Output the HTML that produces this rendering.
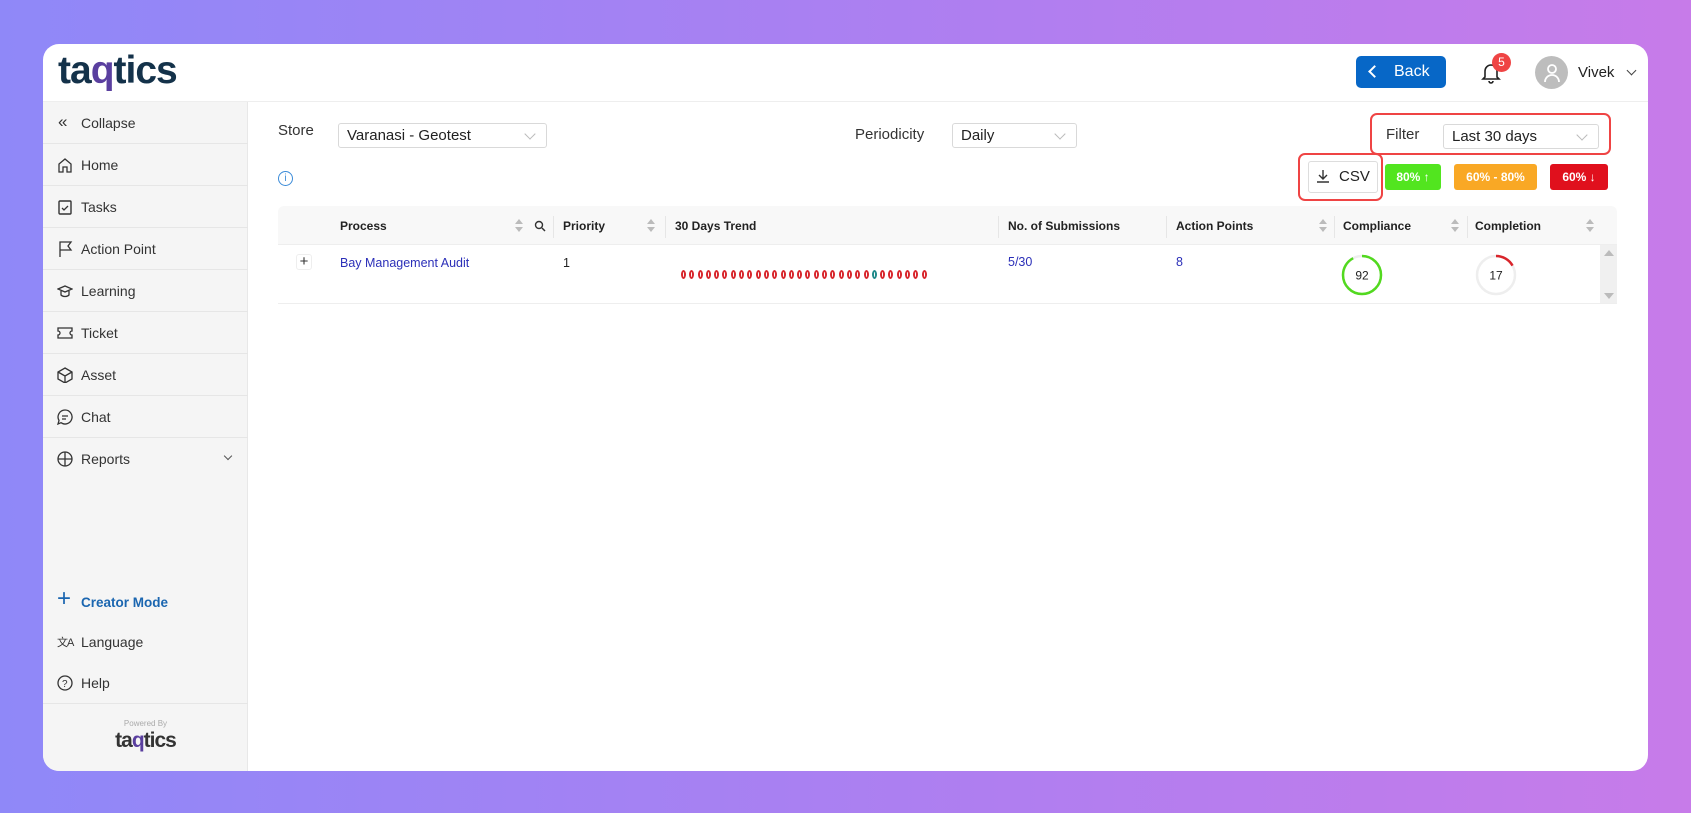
<!DOCTYPE html>
<html><head><meta charset="utf-8"><style>
*{box-sizing:border-box;margin:0;padding:0}
body{width:1691px;height:813px;overflow:hidden;background:linear-gradient(90deg,#8f88f8,#b07ef0 60%,#c77be9);font-family:"Liberation Sans",sans-serif;color:#222;position:relative}
.card{position:absolute;left:43px;top:44px;width:1605px;height:727px;background:#fff;border-radius:16px;overflow:hidden}
.a{position:absolute}
.hdr{left:0;top:0;width:100%;height:58px;border-bottom:1px solid #eee}
.logo{font-weight:bold;color:#14324a;letter-spacing:-1px}
.side{left:0;top:58px;width:205px;height:669px;background:#f5f5f5;border-right:1px solid #e8e8e8}
.it{position:absolute;left:0;width:205px;height:42px;border-bottom:1px solid #e6e6e6;font-size:14px;color:#333;display:flex;align-items:center;padding-left:38px}
.ic{position:absolute;left:14px;top:13px;width:16px;height:16px;white-space:nowrap}
.sel{position:absolute;border:1px solid #d9d9d9;border-radius:3px;height:25px;font-size:15px;padding:3px 8px;color:#222}
.sel:after{content:"";position:absolute;right:12px;top:6px;width:7px;height:7px;border-right:1px solid #bbb;border-bottom:1px solid #bbb;transform:rotate(45deg)}
.lbl{position:absolute;font-size:15px;color:#333}
.th{position:absolute;font-size:12px;font-weight:bold;color:#222;top:219px}
.sort{position:absolute;top:218px;width:8px;height:14px}
.sort:before,.sort:after{content:"";position:absolute;left:0;border-left:4px solid transparent;border-right:4px solid transparent}
.sort:before{top:0;border-bottom:5px solid #bbb}.sort:after{top:8px;border-top:5px solid #bbb}
.sep{position:absolute;top:214px;width:1px;height:22px;background:#e6e6e6}
.dot{display:inline-block;width:5px;height:9px;border:2px solid #d8262c;border-radius:50%;margin-right:3.3px;background:#fff}
</style></head><body>
<div class="card">
 <div class="a hdr">
  <div class="a logo" style="left:15px;top:5px;font-size:39px">ta<span style="color:#5a3f9f">q</span>tics</div>
  <div class="a" style="left:1313px;top:12px;width:90px;height:32px;background:#0767c7;border-radius:5px;color:#fff;font-size:16px;line-height:32px;padding-left:38px">Back</div>
  <div class="a" style="left:1327px;top:23px;width:9px;height:9px;border-left:2px solid #fff;border-bottom:2px solid #fff;transform:rotate(45deg)"></div>
  <svg class="a" style="left:1438px;top:18px" width="20" height="22" viewBox="0 0 20 22"><path d="M4 15V9a6 6 0 0 1 12 0v6l2 2H2z M8 19a2 2 0 0 0 4 0" fill="none" stroke="#222" stroke-width="1.6"/></svg>
  <div class="a" style="left:1449px;top:9px;width:19px;height:19px;border-radius:50%;background:#ef4444;color:#fff;font-size:12px;text-align:center;line-height:19px">5</div>
  <div class="a" style="left:1492px;top:12px;width:33px;height:33px;border-radius:50%;background:#bdbdbd"></div>
  <svg class="a" style="left:1499px;top:18px" width="20" height="22" viewBox="0 0 20 22"><circle cx="10" cy="7" r="4" fill="none" stroke="#fff" stroke-width="1.8"/><path d="M3 20a7 7 0 0 1 14 0" fill="none" stroke="#fff" stroke-width="1.8"/></svg>
  <div class="a" style="left:1535px;top:20px;font-size:15px">Vivek</div>
  <div class="a" style="left:1585px;top:23px;width:7px;height:7px;border-right:1.4px solid #444;border-bottom:1.4px solid #444;transform:rotate(45deg)"></div>
 </div>
 <div class="a side">
  <div class="it" style="top:0">Collapse<span class="ic" style="font-size:17px;top:10px;left:15px">«</span></div>
  <div class="it" style="top:42px">Home<svg class="ic" viewBox="0 0 16 16"><path d="M2 15V7l6-5 6 5v8h-4v-5H6v5z" fill="none" stroke="#333" stroke-width="1.3"/></svg></div>
  <div class="it" style="top:84px">Tasks<svg class="ic" viewBox="0 0 16 16"><rect x="2" y="2" width="12" height="13" rx="1" fill="none" stroke="#333" stroke-width="1.4"/><path d="M5 9l2 2 4-4" fill="none" stroke="#333" stroke-width="1.3"/></svg></div>
  <div class="it" style="top:126px">Action Point<svg class="ic" viewBox="0 0 16 16"><path d="M3 16V1h11l-3 4 3 4H3" fill="none" stroke="#333" stroke-width="1.3"/></svg></div>
  <div class="it" style="top:168px">Learning<svg class="ic" viewBox="0 0 16 16"><path d="M1 6l7-3 7 3-7 3zM4 8v4c2 2 6 2 8 0V8" fill="none" stroke="#333" stroke-width="1.3"/></svg></div>
  <div class="it" style="top:210px">Ticket<svg class="ic" viewBox="0 0 16 16"><path d="M1 3h14v3a2 2 0 0 0 0 4v3H1v-3a2 2 0 0 0 0-4z" fill="none" stroke="#333" stroke-width="1.3"/></svg></div>
  <div class="it" style="top:252px">Asset<svg class="ic" viewBox="0 0 16 16"><path d="M8 1l7 4v7l-7 4-7-4V5zM1 5l7 4 7-4M8 9v7" fill="none" stroke="#333" stroke-width="1.3"/></svg></div>
  <div class="it" style="top:294px">Chat<svg class="ic" viewBox="0 0 16 16"><path d="M8 1a7 7 0 1 1-4 12.7L1 15l1-3.5A7 7 0 0 1 8 1zM5 7h6M5 10h4" fill="none" stroke="#333" stroke-width="1.3"/></svg></div>
  <div class="it" style="top:336px;border:none">Reports<svg class="ic" viewBox="0 0 16 16"><circle cx="8" cy="8" r="7" fill="none" stroke="#333" stroke-width="1.3"/><path d="M8 1v14M1 8h14" stroke="#333" stroke-width="1.3"/></svg><span style="position:absolute;left:182px;top:15px;width:6px;height:6px;border-right:1.2px solid #555;border-bottom:1.2px solid #555;transform:rotate(45deg)"></span></div>
  <div class="it" style="top:479px;border:none;color:#1b66b0;font-weight:bold;font-size:13.5px"><span class="ic" style="font-size:24px;top:6px;color:#1b66b0;font-weight:normal;line-height:24px">+</span>Creator Mode</div>
  <div class="it" style="top:519px;border:none">Language<span class="ic" style="font-size:11px;top:13px;letter-spacing:-1px">文A</span></div>
  <div class="it" style="top:560px">Help<svg class="ic" viewBox="0 0 16 16"><circle cx="8" cy="8" r="7" fill="none" stroke="#333" stroke-width="1.3"/><text x="5" y="12" font-size="10" fill="#333" font-family="Liberation Sans">?</text></svg></div>
  <div class="a" style="left:0;width:205px;top:617px;text-align:center;font-size:8px;color:#aaa">Powered By</div>
  <div class="a logo" style="left:0;width:205px;top:627px;text-align:center;font-size:21px;color:#333">ta<span style="color:#5a3f9f">q</span>tics</div>
 </div>
 <!-- main -->
 <div class="lbl" style="left:235px;top:78px">Store</div>
 <div class="sel" style="left:295px;top:79px;width:209px">Varanasi - Geotest</div>
 <div class="lbl" style="left:812px;top:82px">Periodicity</div>
 <div class="sel" style="left:909px;top:79px;width:125px">Daily</div>
 <div class="a" style="left:1327px;top:69px;width:241px;height:42px;border:2.5px solid #ef4444;border-radius:7px"></div>
 <div class="lbl" style="left:1343px;top:82px">Filter</div>
 <div class="sel" style="left:1400px;top:80px;width:156px">Last 30 days</div>
 <div class="a" style="left:235px;top:127px;width:15px;height:15px;border:1.3px solid #3b8bd8;border-radius:50%;color:#3b8bd8;font-size:10px;text-align:center;line-height:13px">i</div>
 <div class="a" style="left:1255px;top:109px;width:85px;height:48px;border:2.5px solid #ef4444;border-radius:7px"></div>
 <div class="a" style="left:1265px;top:117px;width:70px;height:32px;border:1px solid #ddd;border-radius:3px;font-size:15px;line-height:30px;padding-left:30px">CSV</div>
 <svg class="a" style="left:1273px;top:124px" width="14" height="16" viewBox="0 0 14 16"><path d="M7 2v9M3 7l4 4 4-4M1 14h12" fill="none" stroke="#333" stroke-width="1.4"/></svg>
 <div class="a" style="left:1342px;top:120px;width:56px;height:26px;background:#52e51f;border-radius:3px;color:#fff;font-size:12px;font-weight:bold;text-align:center;line-height:26px">80% ↑</div>
 <div class="a" style="left:1411px;top:120px;width:83px;height:26px;background:#f9a825;border-radius:3px;color:#fff;font-size:12px;font-weight:bold;text-align:center;line-height:26px">60% - 80%</div>
 <div class="a" style="left:1507px;top:120px;width:58px;height:26px;background:#e0101d;border-radius:3px;color:#fff;font-size:12px;font-weight:bold;text-align:center;line-height:26px">60% ↓</div>
 <!-- table -->
 <div class="a" style="left:235px;top:162px;width:1339px;height:39px;background:#f8f8f8;border-bottom:1px solid #eee;border-radius:6px 6px 0 0"></div>
 <div class="a" style="left:235px;top:259px;width:1339px;height:1px;background:#eee"></div>
 <div class="a" style="left:1557px;top:201px;width:17px;height:58px;background:#f0f0f0"></div>
 <div class="a" style="left:1561px;top:206px;border-left:5px solid transparent;border-right:5px solid transparent;border-bottom:6px solid #bbb"></div>
 <div class="a" style="left:1561px;top:249px;border-left:5px solid transparent;border-right:5px solid transparent;border-top:6px solid #bbb"></div>
 <div class="th" style="left:297px;top:175px">Process</div>
 <div class="sort" style="left:472px;top:175px"></div>
 <svg class="a" style="left:491px;top:176px" width="12" height="12" viewBox="0 0 12 12"><circle cx="5" cy="5" r="3.5" fill="none" stroke="#333" stroke-width="1.4"/><path d="M8 8l3 3" stroke="#333" stroke-width="1.5"/></svg>
 <div class="sep" style="left:510px;top:172px"></div>
 <div class="th" style="left:520px;top:175px">Priority</div>
 <div class="sort" style="left:604px;top:175px"></div>
 <div class="sep" style="left:622px;top:172px"></div>
 <div class="th" style="left:632px;top:175px">30 Days Trend</div>
 <div class="sep" style="left:955px;top:172px"></div>
 <div class="th" style="left:965px;top:175px">No. of Submissions</div>
 <div class="sep" style="left:1123px;top:172px"></div>
 <div class="th" style="left:1133px;top:175px">Action Points</div>
 <div class="sort" style="left:1276px;top:175px"></div>
 <div class="sep" style="left:1291px;top:172px"></div>
 <div class="th" style="left:1300px;top:175px">Compliance</div>
 <div class="sort" style="left:1408px;top:175px"></div>
 <div class="sep" style="left:1424px;top:172px"></div>
 <div class="th" style="left:1432px;top:175px">Completion</div>
 <div class="sort" style="left:1543px;top:175px"></div>
 <div class="a" style="left:253px;top:210px;width:16px;height:16px;border:1px solid #eee;border-radius:3px;font-size:15px;line-height:14px;text-align:center;color:#333">+</div>
 <div class="a" style="left:297px;top:212px;font-size:12.5px;color:#2b2fb8">Bay Management Audit</div>
 <div class="a" style="left:520px;top:212px;font-size:12.5px">1</div>
 <div class="a" style="left:638px;top:226px;white-space:nowrap;line-height:0"><span class="dot"></span><span class="dot"></span><span class="dot"></span><span class="dot"></span><span class="dot"></span><span class="dot"></span><span class="dot"></span><span class="dot"></span><span class="dot"></span><span class="dot"></span><span class="dot"></span><span class="dot"></span><span class="dot"></span><span class="dot"></span><span class="dot"></span><span class="dot"></span><span class="dot"></span><span class="dot"></span><span class="dot"></span><span class="dot"></span><span class="dot"></span><span class="dot"></span><span class="dot"></span><span class="dot" style="border-color:#1f8a8a"></span><span class="dot"></span><span class="dot"></span><span class="dot"></span><span class="dot"></span><span class="dot"></span><span class="dot"></span></div>
 <div class="a" style="left:965px;top:211px;font-size:12.5px;color:#2b2fb8">5/30</div>
 <div class="a" style="left:1133px;top:211px;font-size:12.5px;color:#2b2fb8">8</div>
 <svg class="a" style="left:1298px;top:210px" width="42" height="42" viewBox="0 0 42 42"><circle cx="21" cy="21" r="19" fill="none" stroke="#eee" stroke-width="2.5"/><circle cx="21" cy="21" r="19" fill="none" stroke="#52d91f" stroke-width="2.5" stroke-dasharray="110 120" transform="rotate(-90 21 21)"/><text x="21" y="25.5" font-size="12" text-anchor="middle" font-family="Liberation Sans" fill="#222">92</text></svg>
 <svg class="a" style="left:1432px;top:210px" width="42" height="42" viewBox="0 0 42 42"><circle cx="21" cy="21" r="19" fill="none" stroke="#eee" stroke-width="2.5"/><circle cx="21" cy="21" r="19" fill="none" stroke="#d9252b" stroke-width="2.5" stroke-dasharray="20 120" transform="rotate(-90 21 21)"/><text x="21" y="25.5" font-size="12" text-anchor="middle" font-family="Liberation Sans" fill="#222">17</text></svg>
</div>
</body></html>
